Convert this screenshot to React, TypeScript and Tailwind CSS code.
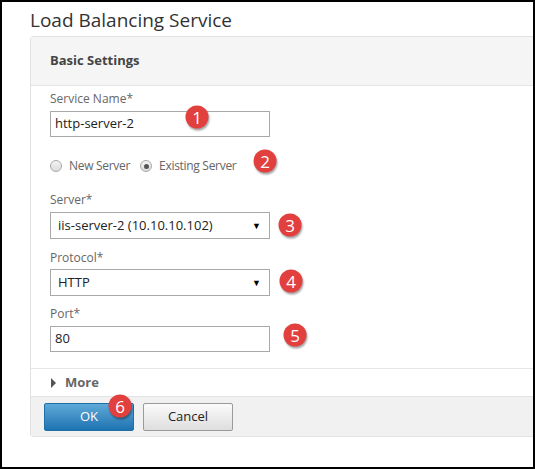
import React from 'react';

const FONT = { fontFamily: '"Open Sans", "Noto Sans", Arial, sans-serif' };

function Badge({ n, x, y }: { n: number; x: number; y: number }) {
  return (
    <div
      className="absolute flex h-[23px] w-[23px] -translate-x-1/2 -translate-y-1/2 items-center justify-center rounded-full bg-[#e2403f] text-[17px] leading-none text-white shadow-[1px_2px_2px_rgba(0,0,0,0.35)]"
      style={{ left: x, top: y }}
    >
      {n}
    </div>
  );
}

function Radio({ checked }: { checked?: boolean }) {
  return (
    <span className="flex h-[12px] w-[12px] items-center justify-center rounded-full border border-[#a8a8a8] bg-gradient-to-b from-[#f4f4f4] to-[#dcdcdc]">
      {checked && <span className="h-[5px] w-[5px] rounded-full bg-[#555]" />}
    </span>
  );
}

function Select({ value, mt }: { value: string; mt: string }) {
  return (
    <div className={`${mt} flex h-[27px] w-[220px] items-center justify-between border border-[#a9a9a9] bg-white pl-[7px] pr-[8px] text-[13px] text-[#222]`}>
      <span>{value}</span>
      <span className="text-[9px] text-black">▼</span>
    </div>
  );
}

export default function App() {
  return (
    <div className="relative h-[469px] w-[535px] overflow-hidden border-2 border-black bg-white" style={FONT}>
      <h1 className="ml-[28px] mt-[5px] text-[19px] font-normal leading-[26px] text-[#333]">Load Balancing Service</h1>

      <div className="ml-[28px] mt-[3px] w-[540px] rounded-[3px] border border-[#e2e2e2]">
        {/* Header */}
        <div className="flex h-[49px] items-center border-b border-[#e4e4e4] bg-[#f5f5f5] pl-[19px]">
          <span className="text-[13px] font-bold text-[#444]">Basic Settings</span>
        </div>

        {/* Body */}
        <div className="flex flex-col pl-[19px] pt-[5px]">
          <label className="text-[12px] leading-4 text-[#666]">Service Name*</label>
          <div className="mt-[4px] flex h-[26px] w-[220px] items-center border border-[#a9a9a9] pl-[4px] text-[13px] text-[#222]">
            http-server-2
          </div>

          <div className="mt-[21px] flex h-4 items-center text-[12px] tracking-[-0.3px] text-[#666]">
            <Radio />
            <span className="ml-[7px]">New Server</span>
            <span className="ml-[10px]"><Radio checked /></span>
            <span className="ml-[7px]">Existing Server</span>
          </div>

          <label className="mt-[18px] text-[12px] leading-4 text-[#666]">Server*</label>
          <Select value="iis-server-2 (10.10.10.102)" mt="mt-[4px]" />

          <label className="mt-[11px] text-[12px] leading-4 text-[#666]">Protocol*</label>
          <Select value="HTTP" mt="mt-[3px]" />

          <label className="mt-[10px] text-[12px] leading-4 text-[#666]">Port*</label>
          <div className="mt-[4px] flex h-[26px] w-[220px] items-center border border-[#a9a9a9] pl-[4px] text-[13px] text-[#222]">
            80
          </div>
        </div>

        {/* More */}
        <div className="mt-[16px] flex h-[28px] items-center border-t border-[#e6e6e6] pl-[20px]">
          <span className="h-0 w-0 border-y-[5px] border-l-[5px] border-y-transparent border-l-[#555]" />
          <span className="ml-[9px] text-[13px] font-bold text-[#666]">More</span>
        </div>

        {/* Footer */}
        <div className="flex gap-[9px] border-t border-[#e4e4e4] bg-[#f1f1f1] pb-[5px] pl-[13px] pt-[6px]">
          <button className="h-[28px] w-[90px] rounded-[2px] border border-[#1f6ea6] bg-gradient-to-b from-[#5ea9d8] to-[#1b73b1] text-[13px] text-white">
            OK
          </button>
          <button className="h-[28px] w-[90px] rounded-[2px] border border-[#9a9a9a] bg-gradient-to-b from-[#fbfbfb] to-[#dedede] text-[13px] text-[#222]">
            Cancel
          </button>
        </div>
      </div>

      <Badge n={1} x={195} y={115} />
      <Badge n={2} x={263} y={159} />
      <Badge n={3} x={288} y={223} />
      <Badge n={4} x={289} y={279} />
      <Badge n={5} x={293} y={333} />
      <Badge n={6} x={118} y={404} />
    </div>
  );
}
